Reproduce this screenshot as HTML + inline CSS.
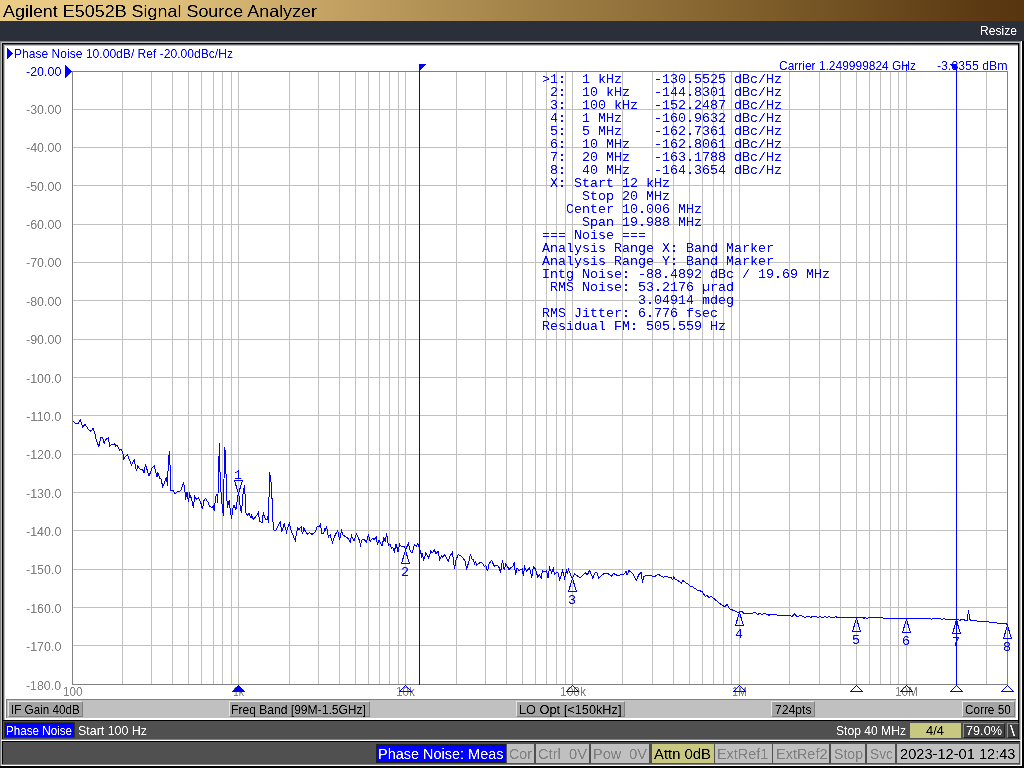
<!DOCTYPE html>
<html><head><meta charset="utf-8"><title>Agilent E5052B Signal Source Analyzer</title>
<style>
html,body{margin:0;padding:0;}
body{width:1024px;height:768px;overflow:hidden;background:#fff;position:relative;font-family:"Liberation Sans",sans-serif;}
.a{position:absolute;white-space:pre;}
.tx{position:absolute;left:0;top:0;width:1024px;height:768px;will-change:transform;filter:url(#th);}
.m{position:absolute;white-space:pre;font-family:"Liberation Mono",monospace;font-size:13.33px;line-height:13px;color:#0000ff;}
.box{position:absolute;box-sizing:border-box;}
</style></head><body>
<svg width="0" height="0" style="position:absolute"><filter id="th" x="0" y="0" width="100%" height="100%" color-interpolation-filters="sRGB"><feComponentTransfer><feFuncA type="table" tableValues="0 0 0.5 1 1"/></feComponentTransfer></filter></svg>
<div class="a" style="left:0;top:0;width:1024px;height:21px;background:linear-gradient(90deg,#ebcd88 0%,#e3c47e 14%,#c4a264 32%,#a5844a 50%,#7f5e2b 74%,#5c3b14 95%,#57360f 100%);"></div>
<div class="a" style="left:0;top:21px;width:1024px;height:20px;background:#2b2f39;"></div>
<div class="a" style="left:0px;top:41px;width:1022px;height:1px;background:#808080;"></div>
<div class="a" style="left:0px;top:41px;width:1px;height:725px;background:#808080;"></div>
<div class="a" style="left:1px;top:42px;width:1020px;height:1px;background:#c0c0c0;"></div>
<div class="a" style="left:1px;top:42px;width:1px;height:723px;background:#c0c0c0;"></div>
<div class="a" style="left:2px;top:43px;width:1018px;height:1px;background:#000;"></div>
<div class="a" style="left:2px;top:43px;width:1px;height:721px;background:#000;"></div>
<div class="a" style="left:3px;top:44px;width:1015px;height:1px;background:#606060;"></div>
<div class="a" style="left:3px;top:44px;width:1px;height:676px;background:#606060;"></div>
<div class="a" style="left:4px;top:45px;width:1014px;height:1px;background:#c0c0c0;"></div>
<div class="a" style="left:4px;top:45px;width:1px;height:675px;background:#c0c0c0;"></div>
<div class="a" style="left:1018px;top:44px;width:1px;height:697px;background:#000;"></div>
<div class="a" style="left:1019px;top:43px;width:1px;height:698px;background:#707070;"></div>
<div class="a" style="left:1020px;top:42px;width:1px;height:724px;background:#c0c0c0;"></div>
<div class="a" style="left:1021px;top:41px;width:1px;height:725px;background:#fff;"></div>
<div class="a" style="left:1022px;top:41px;width:2px;height:727px;background:#000;"></div>
<div class="tx"><div class="a" style="left:233px;top:685px;font-size:12.5px;line-height:14px;height:14px;color:#808080;transform-origin:0 0;transform:scaleX(0.8331);">1k</div>
<div class="a" style="left:396px;top:685px;font-size:12.5px;line-height:14px;height:14px;color:#808080;transform-origin:0 0;transform:scaleX(0.9426);">10k</div>
<div class="a" style="left:560px;top:685px;font-size:12.5px;line-height:14px;height:14px;color:#808080;transform-origin:0 0;transform:scaleX(0.9591);">100k</div>
<div class="a" style="left:732px;top:685px;font-size:12.5px;line-height:14px;height:14px;color:#808080;transform-origin:0 0;transform:scaleX(0.8633);">1M</div>
<div class="a" style="left:895px;top:685px;font-size:12.5px;line-height:14px;height:14px;color:#808080;transform-origin:0 0;transform:scaleX(0.9454);">10M</div>
<div class="a" style="left:62.5px;top:685px;font-size:12.5px;line-height:14px;height:14px;color:#808080;transform-origin:0 0;transform:scaleX(0.9348);">100</div>
<div class="a" style="left:778.5px;top:59px;font-size:12.5px;line-height:14px;height:14px;color:#0000ff;transform-origin:0 0;transform:scaleX(0.9571);">Carrier 1.249999824 GHz</div>
<div class="a" style="left:936.7px;top:59px;font-size:12.5px;line-height:14px;height:14px;color:#0000ff;transform-origin:0 0;transform:scaleX(0.9863);">-3.8355 dBm</div></div>
<svg class="a" style="left:0;top:0" width="1024" height="768" shape-rendering="crispEdges">
<rect x="122" y="71" width="1" height="613" fill="#c0c0c0"/>
<rect x="151" y="71" width="1" height="613" fill="#c0c0c0"/>
<rect x="172" y="71" width="1" height="613" fill="#c0c0c0"/>
<rect x="188" y="71" width="1" height="613" fill="#c0c0c0"/>
<rect x="201" y="71" width="1" height="613" fill="#c0c0c0"/>
<rect x="213" y="71" width="1" height="613" fill="#c0c0c0"/>
<rect x="222" y="71" width="1" height="613" fill="#c0c0c0"/>
<rect x="231" y="71" width="1" height="613" fill="#c0c0c0"/>
<rect x="238" y="71" width="1" height="613" fill="#c0c0c0"/>
<rect x="289" y="71" width="1" height="613" fill="#c0c0c0"/>
<rect x="318" y="71" width="1" height="613" fill="#c0c0c0"/>
<rect x="339" y="71" width="1" height="613" fill="#c0c0c0"/>
<rect x="355" y="71" width="1" height="613" fill="#c0c0c0"/>
<rect x="368" y="71" width="1" height="613" fill="#c0c0c0"/>
<rect x="379" y="71" width="1" height="613" fill="#c0c0c0"/>
<rect x="389" y="71" width="1" height="613" fill="#c0c0c0"/>
<rect x="398" y="71" width="1" height="613" fill="#c0c0c0"/>
<rect x="405" y="71" width="1" height="613" fill="#c0c0c0"/>
<rect x="456" y="71" width="1" height="613" fill="#c0c0c0"/>
<rect x="485" y="71" width="1" height="613" fill="#c0c0c0"/>
<rect x="506" y="71" width="1" height="613" fill="#c0c0c0"/>
<rect x="522" y="71" width="1" height="613" fill="#c0c0c0"/>
<rect x="535" y="71" width="1" height="613" fill="#c0c0c0"/>
<rect x="546" y="71" width="1" height="613" fill="#c0c0c0"/>
<rect x="556" y="71" width="1" height="613" fill="#c0c0c0"/>
<rect x="565" y="71" width="1" height="613" fill="#c0c0c0"/>
<rect x="572" y="71" width="1" height="613" fill="#c0c0c0"/>
<rect x="622" y="71" width="1" height="613" fill="#c0c0c0"/>
<rect x="652" y="71" width="1" height="613" fill="#c0c0c0"/>
<rect x="673" y="71" width="1" height="613" fill="#c0c0c0"/>
<rect x="689" y="71" width="1" height="613" fill="#c0c0c0"/>
<rect x="702" y="71" width="1" height="613" fill="#c0c0c0"/>
<rect x="713" y="71" width="1" height="613" fill="#c0c0c0"/>
<rect x="723" y="71" width="1" height="613" fill="#c0c0c0"/>
<rect x="731" y="71" width="1" height="613" fill="#c0c0c0"/>
<rect x="739" y="71" width="1" height="613" fill="#c0c0c0"/>
<rect x="789" y="71" width="1" height="613" fill="#c0c0c0"/>
<rect x="819" y="71" width="1" height="613" fill="#c0c0c0"/>
<rect x="840" y="71" width="1" height="613" fill="#c0c0c0"/>
<rect x="856" y="71" width="1" height="613" fill="#c0c0c0"/>
<rect x="869" y="71" width="1" height="613" fill="#c0c0c0"/>
<rect x="880" y="71" width="1" height="613" fill="#c0c0c0"/>
<rect x="890" y="71" width="1" height="613" fill="#c0c0c0"/>
<rect x="898" y="71" width="1" height="613" fill="#c0c0c0"/>
<rect x="906" y="71" width="1" height="613" fill="#c0c0c0"/>
<rect x="956" y="71" width="1" height="613" fill="#c0c0c0"/>
<rect x="986" y="71" width="1" height="613" fill="#c0c0c0"/>
<rect x="72" y="109" width="935" height="1" fill="#c0c0c0"/>
<rect x="72" y="147" width="935" height="1" fill="#c0c0c0"/>
<rect x="72" y="185" width="935" height="1" fill="#c0c0c0"/>
<rect x="72" y="224" width="935" height="1" fill="#c0c0c0"/>
<rect x="72" y="262" width="935" height="1" fill="#c0c0c0"/>
<rect x="72" y="300" width="935" height="1" fill="#c0c0c0"/>
<rect x="72" y="339" width="935" height="1" fill="#c0c0c0"/>
<rect x="72" y="377" width="935" height="1" fill="#c0c0c0"/>
<rect x="72" y="415" width="935" height="1" fill="#c0c0c0"/>
<rect x="72" y="454" width="935" height="1" fill="#c0c0c0"/>
<rect x="72" y="492" width="935" height="1" fill="#c0c0c0"/>
<rect x="72" y="530" width="935" height="1" fill="#c0c0c0"/>
<rect x="72" y="569" width="935" height="1" fill="#c0c0c0"/>
<rect x="72" y="607" width="935" height="1" fill="#c0c0c0"/>
<rect x="72" y="645" width="935" height="1" fill="#c0c0c0"/>
<rect x="72.5" y="71.5" width="935" height="613" fill="none" stroke="#808080" stroke-width="1"/>
<rect x="419" y="64" width="1" height="621" fill="#0000ff"/>
<polygon points="419,64 426.5,64 419,71.5" fill="#0000ff"/>
<rect x="956" y="64" width="1" height="621" fill="#0000ff"/>
<polygon points="957,64 949.5,64 957,71.5" fill="#0000ff"/>
<polyline points="72.5,420.6 75.2,423.1 78.4,423.1 80.2,420.0 82.8,426.9 85.2,424.4 88.4,429.4 90.9,431.2 93.0,428.5 94.6,432.5 96.5,441.2 99.0,446.5 100.6,437.5 102.8,438.1 104.2,443.1 105.9,439.4 108.4,437.5 109.6,446.2 112.1,444.4 114.6,443.8 115.9,446.2 117.1,445.6 119.6,450.0 121.5,449.4 122.8,453.1 123.8,459.0 125.2,456.9 127.5,455.0 129.6,460.0 131.5,465.2 134.2,459.8 136.5,471.2 137.8,465.6 139.6,468.8 142.8,470.0 144.0,473.1 145.5,464.4 149.0,476.2 152.1,468.1 154.2,465.6 157.1,476.9 157.8,472.5 159.6,478.1 160.9,478.8 162.8,486.9 166.5,476.9 167.5,486.2 168.4,460.0 169.6,451.2 170.2,471.2 170.9,490.0 172.8,490.0 175.2,493.8 177.1,491.9 180.9,490.6 183.6,481.9 185.2,493.1 185.2,500.0 187.1,491.9 188.4,501.9 189.6,493.8 191.5,498.8 193.4,508.1 194.6,496.2 196.5,499.4 198.4,498.1 200.9,503.1 202.5,509.4 204.0,500.6 205.5,498.5 207.8,501.9 209.6,506.2 212.1,507.5 213.4,506.2 214.2,511.2 215.5,497.5 216.8,494.4 217.8,502.5 218.5,473.8 219.4,443.1 220.2,480.0 221.1,493.8 222.1,505.0 223.4,515.6 224.0,480.0 224.4,446.9 225.5,452.5 226.5,493.8 227.5,508.1 228.4,502.5 229.2,501.2 230.2,510.0 231.5,518.8 232.8,508.8 234.0,505.6 235.9,509.4 237.1,501.2 238.6,491.9 240.0,505.0 241.5,513.1 242.8,495.0 244.6,485.0 245.2,498.1 245.9,512.5 247.1,515.6 249.0,513.1 250.9,518.1 251.5,515.0 253.4,519.4 256.5,515.6 258.4,512.5 259.6,521.2 262.1,522.5 263.4,512.5 265.2,518.8 267.1,520.0 268.0,516.2 268.6,523.1 269.0,498.1 269.6,472.5 271.1,482.5 272.1,500.0 273.0,521.9 273.4,522.5 274.0,530.0 275.9,530.0 280.2,521.9 281.8,531.9 284.2,523.8 286.5,531.9 289.4,522.5 290.9,530.0 295.2,540.6 297.5,528.1 299.0,529.4 301.2,526.9 302.5,534.4 303.8,528.1 307.1,534.4 309.6,532.5 312.1,534.4 315.2,531.9 317.1,526.9 319.0,526.9 320.5,524.4 321.8,533.1 323.8,533.1 324.6,528.1 325.5,531.2 326.5,525.6 328.4,536.9 330.2,535.0 332.5,542.5 335.2,535.0 337.8,530.6 339.6,540.0 341.5,530.6 343.0,535.0 347.8,538.1 350.2,541.9 351.5,535.6 354.0,541.2 356.5,533.8 359.0,539.4 360.5,545.0 362.1,539.4 364.6,540.0 366.5,541.9 368.4,535.0 370.2,541.2 372.8,538.1 374.0,540.0 376.1,536.9 377.5,545.0 379.0,540.0 382.1,545.6 383.8,538.1 385.2,541.2 386.5,533.8 386.5,533.1 388.4,545.0 388.4,545.6 390.2,544.4 390.2,544.4 391.5,548.1 391.8,548.1 392.8,547.5 394.2,551.9 396.2,543.8 398.0,551.9 399.6,544.4 401.5,546.9 404.0,546.2 405.6,549.4 408.4,543.8 410.2,550.6 412.1,553.1 414.4,544.4 416.2,546.2 417.8,543.8 419.4,548.1 421.5,555.6 422.1,553.1 423.8,560.0 425.9,552.5 428.8,558.1 430.9,550.6 432.1,553.1 434.4,550.0 435.9,553.8 438.0,551.2 439.6,559.4 441.8,555.6 442.8,557.5 444.4,554.4 446.5,558.1 448.4,561.2 450.2,555.6 452.4,552.5 454.6,569.4 455.9,560.0 458.4,554.4 462.1,556.9 465.2,561.2 466.5,569.4 469.0,561.2 470.5,553.8 471.5,558.8 473.4,559.4 474.6,565.0 475.2,561.2 476.8,565.0 480.2,562.5 482.8,563.1 484.0,566.2 485.9,565.6 487.5,571.2 489.0,563.8 491.8,560.0 494.0,566.2 497.1,565.0 499.0,567.5 500.5,573.1 502.4,560.0 504.2,570.0 505.9,563.8 509.0,569.4 512.8,566.2 514.2,562.5 515.5,575.0 517.1,568.1 519.0,570.6 522.1,568.8 523.4,576.2 524.6,566.9 526.5,571.2 529.6,568.1 531.8,577.5 533.4,566.9 535.2,568.8 537.8,576.9 539.6,575.0 541.1,578.1 542.5,570.6 544.6,571.9 546.5,570.6 548.0,578.1 549.6,567.5 551.5,572.5 553.4,568.8 554.6,574.4 556.5,572.5 558.4,573.1 559.6,580.6 562.5,570.6 564.6,578.1 566.5,570.6 567.5,573.8 568.4,569.4 570.2,573.8 572.4,578.8 574.6,573.8 575.9,575.0 580.2,577.5 585.9,572.5 587.1,575.0 589.6,570.6 592.8,578.1 594.6,573.1 596.8,572.5 598.6,578.1 604.0,573.5 607.8,573.5 611.5,576.2 613.4,573.5 617.8,575.6 620.2,575.0 624.6,573.8 625.9,571.2 627.1,575.0 629.0,570.6 632.8,573.5 634.0,576.2 636.2,580.6 639.0,574.4 641.2,572.5 642.5,582.5 644.0,576.2 650.2,575.0 654.0,576.9 658.4,574.4 663.4,577.1 665.9,576.5 671.5,577.8 672.8,580.0 673.6,576.9 675.2,579.4 677.1,580.0 681.5,583.1 682.8,580.6 684.6,581.9 688.4,584.4 690.9,586.9 692.8,586.9 697.1,590.0 702.1,591.5 705.2,596.2 707.1,595.6 709.0,597.5 711.5,596.5 717.8,601.9 724.6,606.9 726.9,604.4 729.6,608.8 734.0,610.6 737.8,612.5 739.6,611.5 742.1,611.5 744.0,613.5 752.0,613.5 752.8,613.1 754.6,612.1 757.8,614.4 759.6,613.4 762.1,614.4 764.0,613.4 769.0,615.2 770.9,614.4 776.5,614.4 777.8,615.4 789.6,615.4 792.1,616.5 794.6,614.0 796.5,616.2 799.0,616.2 800.2,615.4 805.2,617.5 806.5,616.5 809.0,616.5 810.9,617.5 812.1,616.5 816.5,616.5 817.8,617.5 820.2,616.5 822.1,617.5 825.2,616.5 827.1,617.5 829.0,616.5 830.9,617.5 834.6,617.5 835.9,616.5 837.1,617.5 862.8,617.5 864.0,618.5 865.2,617.5 867.1,618.5 869.0,617.5 896.0,618.5 930.4,618.5 931.6,619.5 932.9,618.5 940.4,618.5 942.2,619.5 944.1,618.5 945.4,619.5 958.5,619.5 959.8,620.5 961.0,619.5 964.1,619.5 964.8,620.5 967.2,620.5 968.5,610.2 969.8,619.5 971.0,620.5 976.6,620.5 977.9,621.5 988.5,621.5 989.8,622.5 996.6,622.5 997.9,623.5 1006.0,623.5 1007.6,625.6" fill="none" stroke="#0000ff" stroke-width="1"/>
<polygon points="238.5,493.5 234.5,480.5 242.5,480.5" fill="none" stroke="#0000ff"/>
<polygon points="238.5,684.5 231.5,692 245.5,692" fill="#0000ff"/>
<polygon points="405.5,550.5 401.5,563.5 409.5,563.5" fill="none" stroke="#0000ff"/>
<polygon points="405.5,685.5 399.5,691.5 411.5,691.5" fill="none" stroke="#0000ff"/>
<polygon points="572.5,578.5 568.5,591.5 576.5,591.5" fill="none" stroke="#0000ff"/>
<polygon points="572.5,685.5 566.5,691.5 578.5,691.5" fill="none" stroke="#0000ff"/>
<polygon points="739.5,612.5 735.5,625.5 743.5,625.5" fill="none" stroke="#0000ff"/>
<polygon points="739.5,685.5 733.5,691.5 745.5,691.5" fill="none" stroke="#0000ff"/>
<polygon points="856.5,618.5 852.5,631.5 860.5,631.5" fill="none" stroke="#0000ff"/>
<polygon points="856.5,685.5 850.5,691.5 862.5,691.5" fill="none" stroke="#0000ff"/>
<polygon points="906.5,619.5 902.5,632.5 910.5,632.5" fill="none" stroke="#0000ff"/>
<polygon points="906.5,685.5 900.5,691.5 912.5,691.5" fill="none" stroke="#0000ff"/>
<polygon points="956.5,620.5 952.5,633.5 960.5,633.5" fill="none" stroke="#0000ff"/>
<polygon points="956.5,685.5 950.5,691.5 962.5,691.5" fill="none" stroke="#0000ff"/>
<polygon points="1007.5,625.5 1003.5,638.5 1011.5,638.5" fill="none" stroke="#0000ff"/>
<polygon points="1007.5,685.5 1001.5,691.5 1013.5,691.5" fill="none" stroke="#0000ff"/>
<rect x="955" y="621" width="3" height="3" fill="#0000ff"/>
<rect x="906" y="64" width="1" height="7" fill="#0000ff"/>
<polygon points="7,48 13,53.5 7,59" fill="#0000ff"/>
<polygon points="65,65 72,71.5 65,78" fill="#0000ff"/>
</svg>
<div class="tx"><div class="m" style="left:542px;top:73px;">&gt;1:  1 kHz    -130.5525 dBc/Hz
 2:  10 kHz   -144.8301 dBc/Hz
 3:  100 kHz  -152.2487 dBc/Hz
 4:  1 MHz    -160.9632 dBc/Hz
 5:  5 MHz    -162.7361 dBc/Hz
 6:  10 MHz   -162.8061 dBc/Hz
 7:  20 MHz   -163.1788 dBc/Hz
 8:  40 MHz   -164.3654 dBc/Hz
 X: Start 12 kHz
     Stop 20 MHz
   Center 10.006 MHz
     Span 19.988 MHz
=== Noise ===
Analysis Range X: Band Marker
Analysis Range Y: Band Marker
Intg Noise: -88.4892 dBc / 19.69 MHz
 RMS Noise: 53.2176 µrad
            3.04914 mdeg
RMS Jitter: 6.776 fsec
Residual FM: 505.559 Hz</div></div>
<div class="box" style="left:6px;top:699px;width:1010px;height:19px;background:#c0c0c0;border-top:1px solid #808080;border-left:1px solid #808080;"></div>
<div class="box" style="left:8px;top:701px;width:75px;height:16px;background:#a4a4a4;border:1px solid #808080;border-top-color:#e4e4e4;border-left-color:#e4e4e4;"></div>
<div class="box" style="left:229px;top:701px;width:141px;height:16px;background:#a4a4a4;border:1px solid #808080;border-top-color:#e4e4e4;border-left-color:#e4e4e4;"></div>
<div class="box" style="left:516px;top:701px;width:109px;height:16px;background:#a4a4a4;border:1px solid #808080;border-top-color:#e4e4e4;border-left-color:#e4e4e4;"></div>
<div class="box" style="left:771px;top:701px;width:44px;height:16px;background:#a4a4a4;border:1px solid #808080;border-top-color:#e4e4e4;border-left-color:#e4e4e4;"></div>
<div class="box" style="left:962px;top:701px;width:53px;height:16px;background:#a4a4a4;border:1px solid #808080;border-top-color:#e4e4e4;border-left-color:#e4e4e4;"></div>
<div class="a" style="left:3px;top:720px;width:1015px;height:1px;background:#000;"></div>
<div class="a" style="left:3px;top:721px;width:1015px;height:18px;background:#505050;"></div>
<div class="box" style="left:4px;top:722px;width:71px;height:16px;background:#0000ff;border:1px solid #303020;"></div>
<div class="box" style="left:910px;top:723px;width:51px;height:15px;background:#c8c880;"></div>
<div class="box" style="left:963px;top:723px;width:42px;height:15px;background:#404040;border:1px solid #909090;border-right-color:#202020;border-bottom-color:#202020;"></div>
<div class="box" style="left:1007px;top:723px;width:12px;height:15px;background:#404040;border:1px solid #909090;border-right-color:#202020;border-bottom-color:#202020;"></div>
<div class="a" style="left:2px;top:739px;width:1018px;height:1px;background:#808080;"></div>
<div class="a" style="left:1px;top:740px;width:1020px;height:1px;background:#fff;"></div>
<div class="a" style="left:2px;top:741px;width:1018px;height:1px;background:#000;"></div>
<div class="a" style="left:3px;top:742px;width:1017px;height:22px;background:#505050;"></div>
<div class="a" style="left:2px;top:764px;width:1018px;height:1px;background:#808080;"></div>
<div class="box" style="left:376px;top:744px;width:130px;height:19px;background:#0000ff;border:1px solid #202020;"></div>
<div class="box" style="left:507px;top:744px;width:27px;height:19px;background:#c0c0c0;"></div>
<div class="box" style="left:536px;top:744px;width:53px;height:19px;background:#c0c0c0;"></div>
<div class="box" style="left:591px;top:744px;width:58px;height:19px;background:#c0c0c0;"></div>
<div class="box" style="left:652px;top:744px;width:62px;height:19px;background:#c8c880;"></div>
<div class="box" style="left:715px;top:744px;width:57px;height:19px;background:#c0c0c0;"></div>
<div class="box" style="left:773px;top:744px;width:56px;height:19px;background:#c0c0c0;"></div>
<div class="box" style="left:831px;top:744px;width:34px;height:19px;background:#c0c0c0;"></div>
<div class="box" style="left:867px;top:744px;width:28px;height:19px;background:#c0c0c0;"></div>
<div class="box" style="left:897px;top:744px;width:122px;height:19px;background:#c0c0c0;"></div>
<div class="a" style="left:1px;top:765px;width:1021px;height:1px;background:#fff;"></div>
<div class="a" style="left:0px;top:766px;width:1024px;height:2px;background:#000;"></div>
<div class="tx"><div class="a" style="left:3px;top:2px;font-size:16.5px;line-height:18px;height:18px;color:#000;transform-origin:0 0;transform:scaleX(1.0867);">Agilent E5052B Signal Source Analyzer</div>
<div class="a" style="left:979.5px;top:24px;font-size:12.5px;line-height:14px;height:14px;color:#fff;transform-origin:0 0;transform:scaleX(0.9681);">Resize</div>
<div class="a" style="left:25.8px;top:65px;font-size:12.5px;line-height:14px;height:14px;color:#0000ff;transform-origin:0 0;transform:scaleX(0.9985);">-20.00</div>
<div class="a" style="left:25.8px;top:103px;font-size:12.5px;line-height:14px;height:14px;color:#808080;transform-origin:0 0;transform:scaleX(0.9985);">-30.00</div>
<div class="a" style="left:25.8px;top:141px;font-size:12.5px;line-height:14px;height:14px;color:#808080;transform-origin:0 0;transform:scaleX(0.9985);">-40.00</div>
<div class="a" style="left:25.8px;top:180px;font-size:12.5px;line-height:14px;height:14px;color:#808080;transform-origin:0 0;transform:scaleX(0.9985);">-50.00</div>
<div class="a" style="left:25.8px;top:218px;font-size:12.5px;line-height:14px;height:14px;color:#808080;transform-origin:0 0;transform:scaleX(0.9985);">-60.00</div>
<div class="a" style="left:25.8px;top:256px;font-size:12.5px;line-height:14px;height:14px;color:#808080;transform-origin:0 0;transform:scaleX(0.9985);">-70.00</div>
<div class="a" style="left:25.8px;top:295px;font-size:12.5px;line-height:14px;height:14px;color:#808080;transform-origin:0 0;transform:scaleX(0.9985);">-80.00</div>
<div class="a" style="left:25.8px;top:333px;font-size:12.5px;line-height:14px;height:14px;color:#808080;transform-origin:0 0;transform:scaleX(0.9985);">-90.00</div>
<div class="a" style="left:25.8px;top:372px;font-size:12.5px;line-height:14px;height:14px;color:#808080;transform-origin:0 0;transform:scaleX(0.9985);">-100.0</div>
<div class="a" style="left:25.8px;top:410px;font-size:12.5px;line-height:14px;height:14px;color:#808080;transform-origin:0 0;transform:scaleX(1.0256);">-110.0</div>
<div class="a" style="left:25.8px;top:448px;font-size:12.5px;line-height:14px;height:14px;color:#808080;transform-origin:0 0;transform:scaleX(0.9985);">-120.0</div>
<div class="a" style="left:25.8px;top:487px;font-size:12.5px;line-height:14px;height:14px;color:#808080;transform-origin:0 0;transform:scaleX(0.9985);">-130.0</div>
<div class="a" style="left:25.8px;top:525px;font-size:12.5px;line-height:14px;height:14px;color:#808080;transform-origin:0 0;transform:scaleX(0.9985);">-140.0</div>
<div class="a" style="left:25.8px;top:563px;font-size:12.5px;line-height:14px;height:14px;color:#808080;transform-origin:0 0;transform:scaleX(0.9985);">-150.0</div>
<div class="a" style="left:25.8px;top:602px;font-size:12.5px;line-height:14px;height:14px;color:#808080;transform-origin:0 0;transform:scaleX(0.9985);">-160.0</div>
<div class="a" style="left:25.8px;top:640px;font-size:12.5px;line-height:14px;height:14px;color:#808080;transform-origin:0 0;transform:scaleX(0.9985);">-170.0</div>
<div class="a" style="left:25.8px;top:679px;font-size:12.5px;line-height:14px;height:14px;color:#808080;transform-origin:0 0;transform:scaleX(0.9872);">-180.0</div>
<div class="a" style="left:14px;top:47px;font-size:12.5px;line-height:14px;height:14px;color:#0000ff;transform-origin:0 0;transform:scaleX(0.9668);">Phase Noise 10.00dB/ Ref -20.00dBc/Hz</div>
<div class="a" style="left:234px;top:468px;font-family:'Liberation Mono',monospace;font-size:13.33px;line-height:15px;height:15px;color:#0000ff;">1</div>
<div class="a" style="left:401px;top:565px;font-family:'Liberation Mono',monospace;font-size:13.33px;line-height:15px;height:15px;color:#0000ff;">2</div>
<div class="a" style="left:568px;top:593px;font-family:'Liberation Mono',monospace;font-size:13.33px;line-height:15px;height:15px;color:#0000ff;">3</div>
<div class="a" style="left:735px;top:627px;font-family:'Liberation Mono',monospace;font-size:13.33px;line-height:15px;height:15px;color:#0000ff;">4</div>
<div class="a" style="left:852px;top:633px;font-family:'Liberation Mono',monospace;font-size:13.33px;line-height:15px;height:15px;color:#0000ff;">5</div>
<div class="a" style="left:902px;top:634px;font-family:'Liberation Mono',monospace;font-size:13.33px;line-height:15px;height:15px;color:#0000ff;">6</div>
<div class="a" style="left:952px;top:635px;font-family:'Liberation Mono',monospace;font-size:13.33px;line-height:15px;height:15px;color:#0000ff;">7</div>
<div class="a" style="left:1003px;top:640px;font-family:'Liberation Mono',monospace;font-size:13.33px;line-height:15px;height:15px;color:#0000ff;">8</div>
<div class="a" style="left:10.6px;top:703px;font-size:12.5px;line-height:14px;height:14px;color:#000;transform-origin:0 0;transform:scaleX(0.9341);">IF Gain 40dB</div>
<div class="a" style="left:231.25px;top:703px;font-size:12.5px;line-height:14px;height:14px;color:#000;transform-origin:0 0;transform:scaleX(0.9667);">Freq Band [99M-1.5GHz]</div>
<div class="a" style="left:518.5px;top:703px;font-size:12.5px;line-height:14px;height:14px;color:#000;transform-origin:0 0;transform:scaleX(1.0209);">LO Opt [&lt;150kHz]</div>
<div class="a" style="left:774.5px;top:703px;font-size:12.5px;line-height:14px;height:14px;color:#000;transform-origin:0 0;transform:scaleX(0.9725);">724pts</div>
<div class="a" style="left:965px;top:703px;font-size:12.5px;line-height:14px;height:14px;color:#000;transform-origin:0 0;transform:scaleX(0.9406);">Corre 50</div>
<div class="a" style="left:6px;top:724px;font-size:12.5px;line-height:14px;height:14px;color:#fff;transform-origin:0 0;transform:scaleX(0.9312);">Phase Noise</div>
<div class="a" style="left:78px;top:724px;font-size:12.5px;line-height:14px;height:14px;color:#fff;transform-origin:0 0;transform:scaleX(0.9930);">Start 100 Hz</div>
<div class="a" style="left:835.5px;top:724px;font-size:12.5px;line-height:14px;height:14px;color:#fff;transform-origin:0 0;transform:scaleX(0.9686);">Stop 40 MHz</div>
<div class="a" style="left:926px;top:724px;font-size:12.5px;line-height:14px;height:14px;color:#000;transform-origin:0 0;transform:scaleX(1.0350);">4/4</div>
<div class="a" style="left:966px;top:724px;font-size:12.5px;line-height:14px;height:14px;color:#fff;transform-origin:0 0;transform:scaleX(1.0154);">79.0%</div>
<div class="a" style="left:1010px;top:722px;font-size:15px;line-height:17px;height:17px;color:#fff;transform-origin:0 0;transform:scaleX(1.1985);">\</div>
<div class="a" style="left:377.5px;top:745px;font-size:15.5px;line-height:17px;height:17px;color:#fff;transform-origin:0 0;transform:scaleX(0.9337);">Phase Noise: Meas</div>
<div class="a" style="left:509px;top:745px;font-size:15.5px;line-height:17px;height:17px;color:#808080;transform-origin:0 0;transform:scaleX(0.9206);">Cor</div>
<div class="a" style="left:538px;top:745px;font-size:15.5px;line-height:17px;height:17px;color:#808080;transform-origin:0 0;transform:scaleX(0.9480);">Ctrl  0V</div>
<div class="a" style="left:593px;top:745px;font-size:15.5px;line-height:17px;height:17px;color:#808080;transform-origin:0 0;transform:scaleX(0.9353);">Pow  0V</div>
<div class="a" style="left:654px;top:745px;font-size:15.5px;line-height:17px;height:17px;color:#000;transform-origin:0 0;transform:scaleX(0.9585);">Attn 0dB</div>
<div class="a" style="left:717.25px;top:745px;font-size:15.5px;line-height:17px;height:17px;color:#808080;transform-origin:0 0;transform:scaleX(0.9294);">ExtRef1</div>
<div class="a" style="left:775.5px;top:745px;font-size:15.5px;line-height:17px;height:17px;color:#808080;transform-origin:0 0;transform:scaleX(0.9340);">ExtRef2</div>
<div class="a" style="left:833.5px;top:745px;font-size:15.5px;line-height:17px;height:17px;color:#808080;transform-origin:0 0;transform:scaleX(0.9094);">Stop</div>
<div class="a" style="left:869.5px;top:745px;font-size:15.5px;line-height:17px;height:17px;color:#808080;transform-origin:0 0;transform:scaleX(0.8900);">Svc</div>
<div class="a" style="left:900px;top:745px;font-size:15.5px;line-height:17px;height:17px;color:#000;transform-origin:0 0;transform:scaleX(0.9437);">2023-12-01 12:43</div></div>
</body></html>
